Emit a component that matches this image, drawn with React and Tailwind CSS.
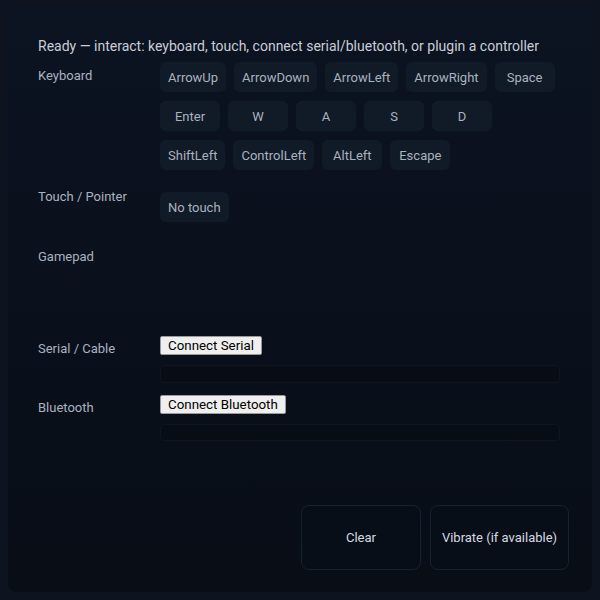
import React from "react";

const keyRows = [
  "ArrowUp", "ArrowDown", "ArrowLeft", "ArrowRight", "Space",
  "Enter", "W", "A", "S", "D",
  "ShiftLeft", "ControlLeft", "AltLeft", "Escape",
];

function Chip({ children }) {
  return (
    <div className="h-[30px] min-w-[60px] px-2 rounded-md bg-[#111a27] text-[13px] text-[#a9b2be] flex items-center justify-center leading-none">
      {children}
    </div>
  );
}

function NativeButton({ children }) {
  return (
    <button className="h-[19px] px-[7px] bg-[#efefef] border border-[#9a9a9a] rounded-[2px] text-[13.33px] text-black leading-none">
      {children}
    </button>
  );
}

export default function App() {
  return (
    <div className="min-h-[600px] bg-[#0d141f] p-2 font-['Roboto',sans-serif]">
      <div className="min-h-[584px] rounded-lg bg-gradient-to-b from-[#0c1321] to-[#080d16] pl-[30px] pr-[32px] pt-[28px] pb-4">
        <div className="text-[14px] leading-[20px] text-[#c8ced7]">
          Ready — interact: keyboard, touch, connect serial/bluetooth, or plugin a controller
        </div>

        <div className="flex mt-[6px]">
          <div className="w-[122px] shrink-0 pt-[4px] text-[13px] leading-[20px] text-[#a9b3bf]">Keyboard</div>
          <div className="flex-1 flex flex-wrap gap-x-2 gap-y-[9px]">
            {keyRows.map((k) => (
              <Chip key={k}>{k}</Chip>
            ))}
          </div>
        </div>

        <div className="flex mt-[16px]">
          <div className="w-[122px] shrink-0 pt-[1px] text-[13px] leading-[20px] text-[#a9b3bf]">Touch / Pointer</div>
          <div className="flex-1 flex flex-wrap gap-2 pt-[6px]">
            <Chip>No touch</Chip>
          </div>
        </div>

        <div className="flex mt-[24px] h-[78px]">
          <div className="w-[122px] shrink-0 pt-[1px] text-[13px] leading-[20px] text-[#a9b3bf]">Gamepad</div>
          <div className="flex-1"></div>
        </div>

        <div className="flex mt-[12px]">
          <div className="w-[122px] shrink-0 pt-[3px] text-[13px] leading-[20px] text-[#a9b3bf]">Serial / Cable</div>
          <div className="flex-1 flex flex-col items-start gap-[10px]">
            <NativeButton>Connect Serial</NativeButton>
            <div className="w-full h-[18px] rounded bg-[#070c15] border border-[#0d1520]"></div>
          </div>
        </div>

        <div className="flex mt-[12px]">
          <div className="w-[122px] shrink-0 pt-[3px] text-[13px] leading-[20px] text-[#a9b3bf]">Bluetooth</div>
          <div className="flex-1 flex flex-col items-start gap-[10px]">
            <NativeButton>Connect Bluetooth</NativeButton>
            <div className="w-full h-[17px] rounded bg-[#070c15] border border-[#0d1520]"></div>
          </div>
        </div>

        <div className="flex justify-end gap-[9px] mt-[64px] mr-[-9px]">
          <button className="w-[120px] h-[65px] rounded-lg border border-[#182130] bg-[#080e18] text-[13px] text-[#d5dae1]">
            Clear
          </button>
          <button className="w-[139px] h-[65px] rounded-lg border border-[#182130] bg-[#080e18] text-[13px] text-[#d5dae1]">
            Vibrate (if available)
          </button>
        </div>
      </div>
    </div>
  );
}
